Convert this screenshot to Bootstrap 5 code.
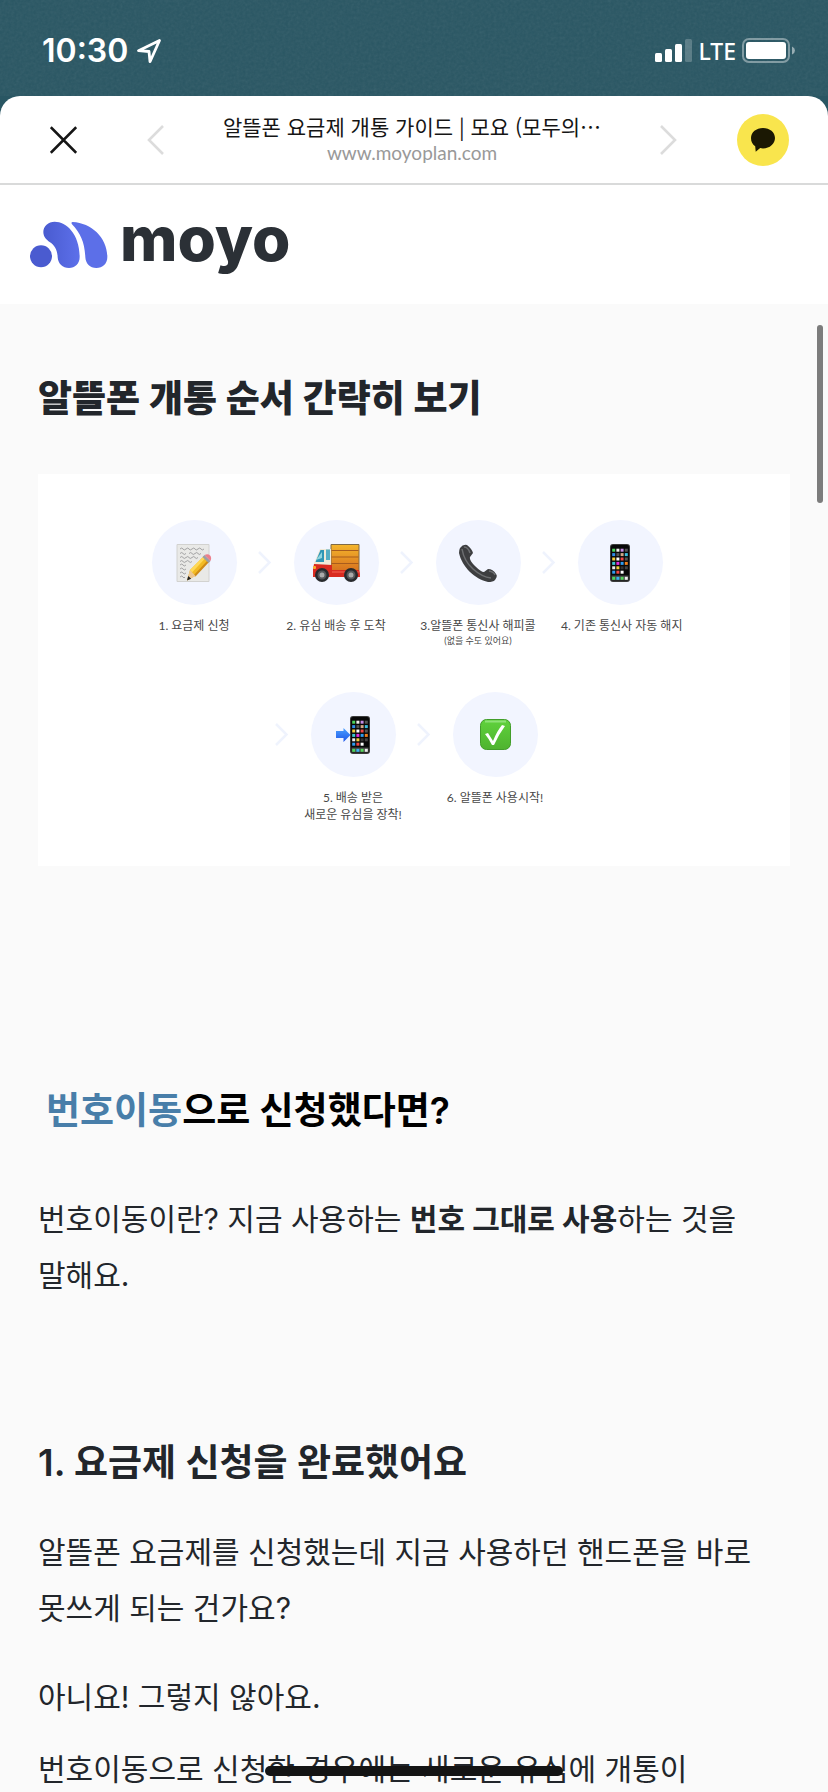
<!DOCTYPE html>
<html lang="ko">
<head>
<meta charset="utf-8">
<meta name="viewport" content="width=device-width, initial-scale=1">
<title>알뜰폰 요금제 개통 가이드 | 모요</title>
<link href="https://cdn.jsdelivr.net/npm/bootstrap@5.3.0/dist/css/bootstrap.min.css" rel="stylesheet">
<style>
  body { background: #295663; font-family: Inter, "Noto Sans CJK KR", sans-serif; color: #22262b; word-break: keep-all; }
  svg { display: block; flex: none; }
  .status { height: 96px; padding: 5px 32px 0 42px; color: #fff; }
  .grain { inset: 0; width: 100%; height: 100%; opacity: .09; }
  .clock { font-size: 32px; font-weight: 600; line-height: 40px; }
  .signals { gap: 6px; }
  .carrier { font-family: "Noto Sans", sans-serif; font-size: 23px; font-weight: 500; line-height: 32px; }
  .sheet { border-radius: 20px 20px 0 0; background: #fff; }
  .topbar { height: 89px; padding: 0 39px 0 50px; border-bottom: 2px solid #d9dada; }
  .topbar button { border: 0; background: none; padding: 0; flex: none; }
  .page-title { font-family: "Noto Sans CJK KR", sans-serif; font-size: 21px; line-height: 30px; color: #151515; }
  .page-url { font-family: Lato, sans-serif; font-size: 19px; line-height: 24px; color: #999; }
  .gap-close { margin-right: 70px; }
  .gap-share { margin-right: 60px; }
  .brand { height: 119px; padding: 0 30px; gap: 12px; color: #2b3036; }
  .brand span { font-weight: 800; font-size: 62px; line-height: 62px; padding-bottom: 12px; }
  .guide { background: #fafafa; padding: 66px 38px 0; }
  .guide h1, .guide h2 { font-size: 37px; line-height: 56px; margin: 0; }
  .guide h1 { font-family: Lato, "Noto Sans CJK KR", sans-serif; font-weight: 900; }
  .guide h2 { font-weight: 600; }
  .guide p { font-size: 30px; line-height: 56px; margin: 0; }
  .guide .lead-title { padding-left: 8px; margin-top: 217px; color: #000; }
  .guide .lead-text { margin-top: 52px; }
  .guide .step-title { margin-top: 132px; }
  .guide .step-text { margin-top: 33px; }
  .guide .step-more { margin-top: 16px; }
  .blue { color: #487ea9; }
  .flow { margin-top: 48px; padding: 46px 0 43px; background: #fff; font-family: Lato, "Noto Sans CJK KR", sans-serif; font-size: 12px; line-height: 17px; color: #484848; }
  .flow-first { padding-right: 14px; margin-bottom: 45px; }
  .flow-second { padding-right: 4px; }
  .stage { width: 118px; text-align: center; white-space: nowrap; }
  .stage-note { font-size: 9px; line-height: 13px; }
  .disc { width: 85px; height: 85px; border-radius: 50%; background: #f2f5ff; margin: 0 auto 12px; }
  .next { width: 24px; height: 85px; }
  .scroll-thumb { right: 5px; top: 21px; width: 6px; height: 178px; border-radius: 3px; background: #7c7c7c; }
  .home-bar { left: 0; right: 0; margin: 0 auto; bottom: 16px; width: 36%; height: 10px; border-radius: 5px; background: #141414; }
</style>
</head>
<body class="vh-100 overflow-hidden d-flex flex-column position-relative">
<svg width="0" height="0" class="position-absolute" aria-hidden="true">
  <defs>
    <g id="phone">
      <rect width="20" height="38" rx="3" fill="#3b3b3b"/><rect x="1" y="1" width="18" height="36" rx="2" fill="#080808"/>
      <g stroke-width="3" fill="none">
        <path d="M2.200 6.200h3" stroke="#4bd45b"/><path d="M6.400 6.200h3" stroke="#eee"/><path d="M10.600 6.200h3" stroke="#c58be6"/><path d="M14.800 6.200h3" stroke="#555"/>
        <path d="M2.200 10.600h3" stroke="#2f8de8"/><path d="M6.400 10.600h3" stroke="#555"/><path d="M10.600 10.600h3" stroke="#d3a789"/><path d="M14.800 10.600h3" stroke="#3bbfe0"/>
        <path d="M2.200 15h3" stroke="#f2cf3c"/><path d="M6.400 15h3" stroke="#fff"/><path d="M10.600 15h3" stroke="#ef4747"/><path d="M14.800 15h3" stroke="#555"/>
        <path d="M2.200 19.400h3" stroke="#3bc8cf"/><path d="M6.400 19.400h3" stroke="#e22fe0"/><path d="M10.600 19.400h3" stroke="#2f9cf0"/><path d="M14.800 19.400h3" stroke="#ef7f1c"/>
        <path d="M2.200 23.800h3" stroke="#eee"/><path d="M6.400 23.800h3" stroke="#f2cf3c"/><path d="M10.600 23.800h3" stroke="#333"/><path d="M14.800 23.800h3" stroke="#444"/>
        <path d="M2.200 28.200h3" stroke="#2f9cf0"/><path d="M6.400 28.200h3" stroke="#ef4747"/><path d="M10.600 28.200h3" stroke="#fff"/>
      </g>
      <rect x="1.500" y="31.500" width="17" height="5" fill="#444"/>
      <path d="M2.200 34.300h3" stroke="#4bd45b" stroke-width="3"/><path d="M6.400 34.300h3" stroke="#37b4ee" stroke-width="3"/><path d="M10.600 34.300h3" stroke="#56d65c" stroke-width="3"/><path d="M14.800 34.300h3" stroke="#eee" stroke-width="3"/>
    </g>
    <path id="chev" d="M6 32l10.500 10.500L6 53" fill="none" stroke="#eff3fd" stroke-width="2.500"/>
    <linearGradient id="mark" x1="0" x2="1"><stop offset="0" stop-color="#495bd0"/><stop offset="1" stop-color="#5d70ea"/></linearGradient>
    <linearGradient id="cargo" x2="0" y2="1"><stop stop-color="#f4b62c"/><stop offset="1" stop-color="#d8731f"/></linearGradient>
    <linearGradient id="go" x2="0" y2="1"><stop stop-color="#4aa0ff"/><stop offset="1" stop-color="#1f56e8"/></linearGradient>
    <linearGradient id="ok" x2="0" y2="1"><stop stop-color="#5fd23c"/><stop offset="1" stop-color="#4fb32f"/></linearGradient>
  </defs>
</svg>

<div class="status d-flex align-items-center justify-content-between position-relative flex-shrink-0">
  <svg class="grain position-absolute" aria-hidden="true"><filter id="noise"><feTurbulence type="fractalNoise" baseFrequency=".35" numOctaves="2"/><feColorMatrix type="saturate" values="0"/></filter><rect width="100%" height="100%" filter="url(#noise)"/></svg>
  <div class="d-flex align-items-center gap-2 position-relative">
    <span class="clock">10:30</span>
    <svg width="26" height="26" viewBox="0 0 26 26" fill="none" stroke="#fff" stroke-width="2.800" stroke-linejoin="round"><path d="M23.500 2.500L2.500 12.700l10.500.8 1 10.200z"/></svg>
  </div>
  <div class="signals d-flex align-items-center position-relative">
    <svg width="37" height="24" viewBox="0 0 37 24" fill="#fff"><rect y="14" width="7" height="9" rx="1.500"/><rect x="10" y="10" width="7" height="13" rx="1.500"/><rect x="20" y="5" width="7" height="18" rx="1.500"/><rect x="30" width="7" height="23" rx="1.500" opacity=".22"/></svg>
    <span class="carrier">LTE</span>
    <svg width="54" height="26" viewBox="0 0 54 26"><rect x="1" y="1" width="46" height="23" rx="6" fill="none" stroke="#fff" stroke-opacity=".4" stroke-width="2"/><rect x="4" y="4" width="40" height="17" rx="3" fill="#fff"/><path d="M50 8.500q3 1.500 3 4t-3 4z" fill="#fff" opacity=".5"/></svg>
  </div>
</div>

<div class="sheet flex-grow-1 overflow-hidden d-flex flex-column">
  <nav class="topbar d-flex align-items-center flex-shrink-0">
    <button class="gap-close" aria-label="닫기"><svg width="27" height="28" viewBox="0 0 27 28" stroke="#151515" stroke-width="2.600"><path d="M.8 1.200l25.400 25.600M26.200 1.200L.8 26.800"/></svg></button>
    <button aria-label="뒤로"><svg width="17" height="30" viewBox="0 0 17 30" fill="none" stroke="#dcdcdc" stroke-width="2.600"><path d="M16 1L2 15l14 14"/></svg></button>
    <div class="flex-grow-1 text-center pb-1">
      <div class="page-title text-nowrap">알뜰폰 요금제 개통 가이드 | 모요 (모두의…</div>
      <div class="page-url">www.moyoplan.com</div>
    </div>
    <button class="gap-share" aria-label="앞으로"><svg width="17" height="30" viewBox="0 0 17 30" fill="none" stroke="#dcdcdc" stroke-width="2.600"><path d="M1 1l14 14L1 29"/></svg></button>
    <button aria-label="공유"><svg width="52" height="52" viewBox="0 0 52 52"><circle cx="26" cy="26" r="26" fill="#f9e54d"/><path d="M26 14c-6.800 0-12 4.300-12 10 0 3.800 1.500 6.400 4.200 8.300l.5 5.500 4.500-3.700c.9.200 1.800.3 2.800.3 6.800 0 12-4.600 12-10.400S32.800 14 26 14z" fill="#1b1803"/></svg></button>
  </nav>

  <header class="brand d-flex align-items-center flex-shrink-0">
    <svg width="78" height="47" viewBox="90 660 234 141" fill="url(#mark)"><circle cx="123" cy="766" r="33" fill="#4a5bd0"/><path d="M164 662C200 662 239 700 239 768C239 788 225 801 207 801C188 801 174 788 173 769C172 745 163 733 150 724C138 715 130 706 130 693C130 675 145 662 164 662Z"/><path d="M218 663C275 666 322 710 322 768C322 788 308 801 289 801C270 801 257 788 256 769C254 725 242 697 216 670Q212 664 218 663Z" fill="#5c6fe8"/></svg>
    <span>moyo</span>
  </header>

  <main class="guide flex-grow-1 position-relative">
    <div class="scroll-thumb position-absolute"></div>
    <h1>알뜰폰 개통 순서 간략히 보기</h1>

    <section class="flow">
      <div class="flow-first d-flex justify-content-center">
        <div class="stage">
          <div class="disc d-flex align-items-center justify-content-center"><svg width="36" height="38" viewBox="0 0 36 38"><path d="M1 .5h32v37H1z" fill="#e9e9e7" stroke="#d2d2d0"/><g fill="none" stroke="#9a9a9c" stroke-width=".9"><path d="M4 5q2-2 3 0t3 0 3 0 3 0 3 0 3 0 3 0 3 0M4 9.500q2-2 3 0t3 0M13 9.500q2-2 3 0t3 0 3 0 3 0M4 13.500q2-2 3 0t3 0 3 0 3 0 3 0 3 0M4 17.500q2-2 3 0t3 0 3 0 3 0M4 21q2-2 3 0t3 0M4 25q2-2 3 0t3 0M4 29q2-2 3 0t3 0M4 33q2-2 3 0t2 0"/></g><path d="M11 36.500l3-10.500 14-14 5 5-14 15z" fill="#f2bb24"/><path d="M14 26l13-13 2 1.500-13 14z" fill="#ffd957"/><path d="M17.500 31.500l14-15 2 1-14 15z" fill="#cf8b16"/><path d="M11 36.500l3-10.500 5.500 6z" fill="#ecc794"/><path d="M11 36.500l1.200-4.500 3 2.800z" fill="#222"/><path d="M26.500 13l2-2 6 6-2 2z" fill="#9b9ea4"/><path d="M28.500 11q3.500-1.500 5.500.500t.500 5.500z" fill="#ec7f8c"/></svg></div>
          1. 요금제 신청
        </div>
        <svg class="next"><use href="#chev"/></svg>
        <div class="stage">
          <div class="disc d-flex align-items-center justify-content-center"><svg width="48" height="38" viewBox="0 0 48 38"><path d="M19 .5h28v26H19z" fill="url(#cargo)" stroke="#806a45"/><path d="M19.500 6.500h27M19.500 13h27M19.500 19.500h27" stroke="#a85c1d"/><path d="M8 5h11v20H2v-6z" fill="#efe9d8"/><path d="M8.500 6H12v12H3.500z" fill="#2f96b5"/><path d="M4 16l6-8v6z" fill="#91d6df"/><path d="M14 5.500h4V16h-4z" fill="#55adc3"/><path d="M2 20l18 1v5h27q1 1 1 7H1V25z" fill="#d92a20"/><path d="M20 28h27" stroke="#f66454"/><rect x="1" y="22" width="3" height="3" rx="1" fill="#f8ad2c"/><g fill="#282a2d"><circle cx="10" cy="31" r="7"/><circle cx="39" cy="31" r="7"/></g><g fill="#aaa" stroke="#55585b" stroke-width="2"><circle cx="10" cy="31" r="3.500"/><circle cx="39" cy="31" r="3.500"/></g></svg></div>
          2. 유심 배송 후 도착
        </div>
        <svg class="next"><use href="#chev"/></svg>
        <div class="stage">
          <div class="disc d-flex align-items-center justify-content-center"><svg width="38" height="38" viewBox="0 0 38 38"><path d="M1 4Q4 0 8 1q5 4 6 8l-3 4q-1 3 5 9t9 6l4-3q5 0 8 5 2 2-1 6-2 2-7 2C16 35 3 23 0 9q0-3 1-5z" fill="#3d3e40"/><path d="M3 5q2 12 11 20t18 9M5 3q4 0 6 6M30 27q5 1 6 4" fill="none" stroke="#6c6e70" stroke-width="1.500"/></svg></div>
          3.알뜰폰 통신사 해피콜
          <div class="stage-note">(없을 수도 있어요)</div>
        </div>
        <svg class="next"><use href="#chev"/></svg>
        <div class="stage">
          <div class="disc d-flex align-items-center justify-content-center"><svg width="20" height="38"><use href="#phone"/></svg></div>
          4. 기존 통신사 자동 해지
        </div>
      </div>
      <div class="flow-second d-flex justify-content-center">
        <svg class="next"><use href="#chev"/></svg>
        <div class="stage">
          <div class="disc d-flex align-items-center justify-content-center"><svg width="34" height="38" viewBox="0 0 34 38"><use href="#phone" x="14"/><path d="M0 15h7.500v-3l7 7-7 7v-4H0z" fill="url(#go)"/></svg></div>
          5. 배송 받은<br>새로운 유심을 장착!
        </div>
        <svg class="next"><use href="#chev"/></svg>
        <div class="stage">
          <div class="disc d-flex align-items-center justify-content-center"><svg width="31" height="31" viewBox="0 0 31 31"><rect x=".5" y=".5" width="30" height="30" rx="6" fill="url(#ok)" stroke="#429d2a"/><path d="M5 2.500h21" stroke="#8ee276" stroke-width="2"/><path d="M5 15l3-1 5 8q4-10 9-16l3 1q-6 8-11 19h-2q-3-6-7-11z" fill="#fff"/></svg></div>
          6. 알뜰폰 사용시작!
        </div>
      </div>
    </section>

    <h2 class="lead-title"><span class="blue">번호이동</span>으로 신청했다면?</h2>
    <p class="lead-text">번호이동이란? 지금 사용하는 <b>번호 그대로 사용</b>하는 것을 말해요.</p>
    <h2 class="step-title">1. 요금제 신청을 완료했어요</h2>
    <p class="step-text">알뜰폰 요금제를 신청했는데 지금 사용하던 핸드폰을 바로 못쓰게 되는 건가요?</p>
    <p class="step-text">아니요! 그렇지 않아요.</p>
    <p class="step-more">번호이동으로 신청한 경우에는 새로운 유심에 개통이</p>
  </main>
</div>
<div class="home-bar position-absolute"></div>
<script src="https://cdn.jsdelivr.net/npm/bootstrap@5.3.0/dist/js/bootstrap.bundle.min.js"></script>
</body>
</html>
